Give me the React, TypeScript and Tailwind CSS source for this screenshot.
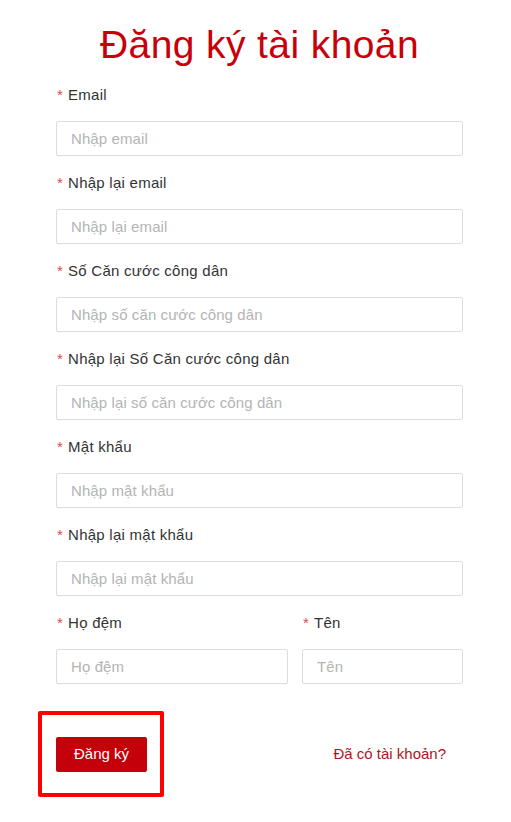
import React from "react";

const font = { fontFamily: '"Liberation Sans", Arial, sans-serif' };

const Label: React.FC<{ text: string }> = ({ text }) => (
  <label className="block text-[15px] leading-[20px] tracking-[0.25px] text-[#333]">
    <span className="ml-[1px] mr-[5px] text-[#e5484d]">*</span>
    {text}
  </label>
);

const Input: React.FC<{ placeholder: string }> = ({ placeholder }) => (
  <input
    placeholder={placeholder}
    className="block h-[35px] w-full rounded-[2px] border border-[#dcdcdc] px-[14px] text-[15px] tracking-[0.1px] text-[#333] outline-none placeholder:text-[#b4b4b4]"
  />
);

const fields = [
  { label: "Email", placeholder: "Nhập email" },
  { label: "Nhập lại email", placeholder: "Nhập lại email" },
  { label: "Số Căn cước công dân", placeholder: "Nhập số căn cước công dân" },
  { label: "Nhập lại Số Căn cước công dân", placeholder: "Nhập lại số căn cước công dân" },
  { label: "Mật khẩu", placeholder: "Nhập mật khẩu" },
  { label: "Nhập lại mật khẩu", placeholder: "Nhập lại mật khẩu" },
];

export default function App() {
  return (
    <div className="min-h-[822px] w-[511px] bg-white" style={font}>
      <div className="ml-[56px] w-[407px] pt-[22px]">
        <h1 className="text-center text-[39px] leading-[46px] tracking-[0.4px] text-[#c8000a]">Đăng ký tài khoản</h1>
        <div className="mt-[17px] flex flex-col gap-[17px]">
          {fields.map((f) => (
            <div key={f.label} className="flex flex-col gap-[16px]">
              <Label text={f.label} />
              <Input placeholder={f.placeholder} />
            </div>
          ))}
          <div className="flex gap-[14px]">
            <div className="flex w-[232px] flex-col gap-[16px]">
              <Label text="Họ đệm" />
              <Input placeholder="Họ đệm" />
            </div>
            <div className="flex flex-1 flex-col gap-[16px]">
              <Label text="Tên" />
              <Input placeholder="Tên" />
            </div>
          </div>
        </div>
        <div className="mt-[27px] flex items-center justify-between">
          <div className="-ml-[18px] rounded-[2px] border-[4px] border-[#ff0000] pt-[22px] pr-[13px] pb-[21px] pl-[14px]">
            <button className="h-[35px] w-[91px] rounded-[2px] bg-[#c4000b] text-[15px] text-white">Đăng ký</button>
          </div>
          <a className="mr-[17px] text-[15px] text-[#b0141c]">Đã có tài khoản?</a>
        </div>
      </div>
    </div>
  );
}
